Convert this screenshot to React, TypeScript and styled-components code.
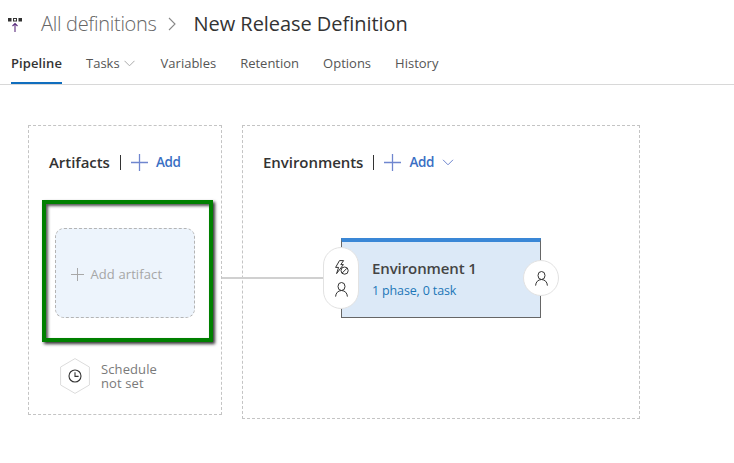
import React from "react";
import styled, { createGlobalStyle } from "styled-components";

const GlobalStyle = createGlobalStyle`
  html, body {
    margin: 0;
    padding: 0;
    background: #fff;
    font-family: "Open Sans", "Noto Sans", sans-serif;
  }
`;

const Page = styled.div`
  width: 734px;
  height: 463px;
  overflow: hidden;
  background: #fff;
`;

/* header */
const Header = styled.header`
  display: flex;
  align-items: center;
  height: 47px;
  padding-left: 8px;
`;

const Crumb = styled.span`
  margin-left: 17px;
  font-size: 20px;
  font-weight: 300;
  color: #666;
  letter-spacing: -0.3px;
`;

const Crumbsep = styled.svg`
  margin: 0 18px 0 11px;
`;

const Title = styled.h1`
  margin: 0;
  font-size: 20px;
  font-weight: 400;
  color: #333;
  letter-spacing: -0.05px;
`;

/* tabs */
const TabBar = styled.nav`
  display: flex;
  height: 37px;
  padding-left: 11px;
  gap: 24px;
  border-bottom: 1px solid #d8d8d8;
`;

const Tab = styled.div<{ $active?: boolean; $menu?: boolean }>`
  display: flex;
  align-items: center;
  gap: 4px;
  height: 37px;
  padding-bottom: 3px;
  margin-right: ${(p) => (p.$menu ? 2 : 0)}px;
  box-sizing: border-box;
  font-size: 13px;
  letter-spacing: ${(p) => (p.$active ? "0.1px" : "0")};
  color: ${(p) => (p.$active ? "#333" : "#555")};
  font-weight: ${(p) => (p.$active ? 600 : 400)};
  border-bottom: 2px solid ${(p) => (p.$active ? "#106ebe" : "transparent")};
`;

/* canvas */
const Canvas = styled.main`
  position: relative;
  display: flex;
  align-items: flex-start;
  gap: 20px;
  padding: 40px 0 0 28px;
`;

const Panel = styled.section<{ $w: number; $h: number }>`
  box-sizing: border-box;
  width: ${(p) => p.$w}px;
  height: ${(p) => p.$h}px;
  border: 1px dashed #c4c4c4;
  padding: 26px 20px 0;
`;

const PanelHead = styled.div`
  display: flex;
  align-items: center;
  height: 20px;
`;

const PanelTitle = styled.h2`
  margin: 0;
  font-size: 15px;
  font-weight: 600;
  color: #333;
  letter-spacing: -0.05px;
`;

const Divider = styled.span`
  width: 1px;
  height: 15px;
  margin: 0 10px 0 10px;
  background: #333;
`;

const AddLink = styled.span`
  margin-left: 8px;
  font-size: 13.5px;
  font-weight: 600;
  color: #3a6fc4;
  letter-spacing: -0.3px;
`;

const MenuGap = styled.span`
  width: 8px;
`;

const Highlight = styled.div`
  box-sizing: border-box;
  width: 171px;
  height: 142px;
  margin: 28px 0 0 -7px;
  padding: 24px 13px;
  border: 4.5px solid #008000;
  box-shadow: 2px 2px 3px #333, inset 2px 2px 3px #555;
  background: #fff;
`;

const ArtifactCard = styled.div`
  box-sizing: border-box;
  display: flex;
  align-items: center;
  gap: 7px;
  width: 140px;
  height: 90px;
  padding: 2px 0 0 15px;
  margin-left: -4.5px;
  border: 1px dashed #b4b4b4;
  border-radius: 9px;
  background: #edf4fc;
`;

const ArtifactLabel = styled.span`
  font-size: 13px;
  color: #a6a6a6;
  letter-spacing: 0.1px;
`;

const Schedule = styled.div`
  display: flex;
  align-items: center;
  gap: 11px;
  margin: 16px 0 0 11px;
`;

const ScheduleText = styled.div`
  color: #7a7a7a;
`;

const ScheduleLine = styled.div`
  height: 14px;
  font-size: 13px;
  line-height: 14px;
  letter-spacing: 0.1px;
`;

const EnvCard = styled.div`
  position: relative;
  box-sizing: border-box;
  width: 200px;
  height: 80px;
  margin: 66px 0 0 78px;
  padding: 16px 0 0 30px;
  background: #dce9f7;
  border: 1px solid #666;
  border-top: 4px solid #3a87d6;
`;

const EnvName = styled.div`
  font-size: 15px;
  font-weight: 600;
  line-height: 20px;
  color: #444;
  letter-spacing: -0.1px;
`;

const EnvSub = styled.div`
  margin-top: 4px;
  font-size: 12.5px;
  line-height: 17px;
  color: #1d77b8;
  letter-spacing: -0.15px;
`;

const Pill = styled.div`
  position: absolute;
  left: -19px;
  top: 5px;
  box-sizing: border-box;
  display: flex;
  flex-direction: column;
  align-items: center;
  justify-content: center;
  gap: 7px;
  width: 36px;
  height: 62px;
  background: #fff;
  border: 1px solid #e2e2e2;
  border-radius: 18px;
`;

const RoundBadge = styled.div`
  position: absolute;
  right: -19px;
  top: 18px;
  box-sizing: border-box;
  display: flex;
  align-items: center;
  justify-content: center;
  width: 36px;
  height: 36px;
  background: #fff;
  border: 1px solid #e2e2e2;
  border-radius: 50%;
`;

const Connector = styled.div`
  position: absolute;
  left: 222px;
  top: 192px;
  width: 102px;
  height: 2px;
  background: #d0d0d0;
`;

const BrandIcon = () => (
  <svg width="16" height="16" viewBox="0 0 16 16">
    <rect x="0" y="2" width="3.5" height="3.5" fill="#333" />
    <rect x="5.5" y="2.5" width="3" height="2.5" fill="none" stroke="#333" strokeWidth="1" />
    <rect x="10.5" y="2" width="3.5" height="3.5" fill="#333" />
    <path d="M7 16V7.5M4.5 10L7 7.5L9.5 10" fill="none" stroke="#5c2d7e" strokeWidth="1.1" />
  </svg>
);

const Plus = ({ size, color }: { size: number; color: string }) => (
  <svg width={size} height={size} viewBox="0 0 16 16">
    <path d="M0 8H16M8 0V16" stroke={color} strokeWidth="1.2" fill="none" />
  </svg>
);

const Chevron = ({ color, w = 11 }: { color: string; w?: number }) => (
  <svg width={w} height="7" viewBox="0 0 11 7">
    <path d="M.5 .8L5.5 5.8L10.5 .8" stroke={color} fill="none" strokeWidth="1" />
  </svg>
);

const Person = () => (
  <svg width="13" height="15" viewBox="0 0 13 15">
    <ellipse cx="6.5" cy="4.5" rx="3.5" ry="4" fill="none" stroke="#333" strokeWidth="1" />
    <path d="M.6 14.6C.8 11 2.9 8.7 6.5 8.5C10.1 8.7 12.2 11 12.4 14.6" fill="none" stroke="#333" strokeWidth="1" />
  </svg>
);

const TriggerIcon = () => (
  <svg width="15" height="15" viewBox="0 0 15 15">
    <path d="M5.5 .6H9.6L6.8 4.6H9.4L2.6 13.6L4.6 7.4H1.6Z" fill="none" stroke="#333" strokeWidth="1" />
    <circle cx="10.6" cy="10.6" r="3.6" fill="#fff" stroke="#333" strokeWidth="1" />
    <path d="M8.2 13L13 8.2" stroke="#333" strokeWidth="1" />
  </svg>
);

const ScheduleIcon = () => (
  <svg width="30" height="36" viewBox="0 0 30 36">
    <path d="M15 .6L29.4 9V27L15 35.4L.6 27V9Z" fill="#fff" stroke="#dcdcdc" strokeWidth="1" />
    <circle cx="15" cy="18" r="6" fill="none" stroke="#333" strokeWidth="1.1" />
    <path d="M15 14.2V18.4H18.6" fill="none" stroke="#333" strokeWidth="1.1" />
  </svg>
);

export default function App() {
  return (
    <Page>
      <GlobalStyle />
      <Header>
        <BrandIcon />
        <Crumb>All definitions</Crumb>
        <Crumbsep width="8" height="14" viewBox="0 0 8 14">
          <path d="M1 1L7 7L1 13" fill="none" stroke="#888" strokeWidth="1.1" />
        </Crumbsep>
        <Title>New Release Definition</Title>
      </Header>
      <TabBar>
        <Tab $active>Pipeline</Tab>
        <Tab $menu>
          Tasks <Chevron color="#aaa" />
        </Tab>
        <Tab>Variables</Tab>
        <Tab>Retention</Tab>
        <Tab>Options</Tab>
        <Tab>History</Tab>
      </TabBar>
      <Canvas>
        <Connector />
        <Panel $w={194} $h={290}>
          <PanelHead>
            <PanelTitle>Artifacts</PanelTitle>
            <Divider />
            <Plus size={17} color="#6f86cf" />
            <AddLink>Add</AddLink>
          </PanelHead>
          <Highlight>
            <ArtifactCard>
              <Plus size={13} color="#a6a6a6" />
              <ArtifactLabel>Add artifact</ArtifactLabel>
            </ArtifactCard>
          </Highlight>
          <Schedule>
            <ScheduleIcon />
            <ScheduleText>
              <ScheduleLine>Schedule</ScheduleLine>
              <ScheduleLine>not set</ScheduleLine>
            </ScheduleText>
          </Schedule>
        </Panel>
        <Panel $w={398} $h={294}>
          <PanelHead>
            <PanelTitle>Environments</PanelTitle>
            <Divider />
            <Plus size={17} color="#6f86cf" />
            <AddLink>Add</AddLink>
            <MenuGap />
            <Chevron color="#6f86cf" w={12} />
          </PanelHead>
          <EnvCard>
            <Pill>
              <TriggerIcon />
              <Person />
            </Pill>
            <EnvName>Environment 1</EnvName>
            <EnvSub>1 phase, 0 task</EnvSub>
            <RoundBadge>
              <Person />
            </RoundBadge>
          </EnvCard>
        </Panel>
      </Canvas>
    </Page>
  );
}
